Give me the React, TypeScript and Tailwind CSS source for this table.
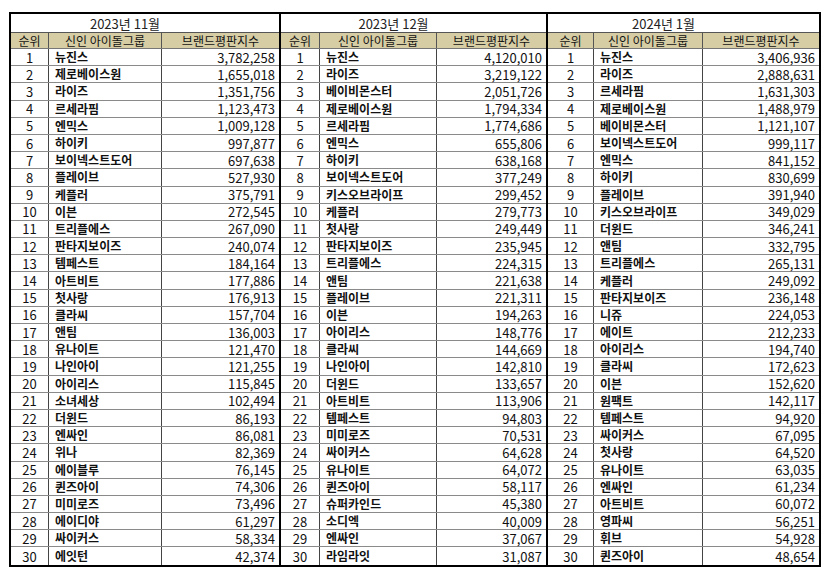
import React from 'react';

type Row = [string, string];

const nov: Row[] = [
  ['뉴진스', '3,782,258'], ['제로베이스원', '1,655,018'], ['라이즈', '1,351,756'], ['르세라핌', '1,123,473'],
  ['엔믹스', '1,009,128'], ['하이키', '997,877'], ['보이넥스트도어', '697,638'], ['플레이브', '527,930'],
  ['케플러', '375,791'], ['이븐', '272,545'], ['트리플에스', '267,090'], ['판타지보이즈', '240,074'],
  ['템페스트', '184,164'], ['아트비트', '177,886'], ['첫사랑', '176,913'], ['클라씨', '157,704'],
  ['앤팀', '136,003'], ['유나이트', '121,470'], ['나인아이', '121,255'], ['아이리스', '115,845'],
  ['소녀세상', '102,494'], ['더윈드', '86,193'], ['엔싸인', '86,081'], ['위나', '82,369'],
  ['에이블루', '76,145'], ['퀸즈아이', '74,306'], ['미미로즈', '73,496'], ['에이디야', '61,297'],
  ['싸이커스', '58,334'], ['에잇턴', '42,374'],
];

const dec: Row[] = [
  ['뉴진스', '4,120,010'], ['라이즈', '3,219,122'], ['베이비몬스터', '2,051,726'], ['제로베이스원', '1,794,334'],
  ['르세라핌', '1,774,686'], ['엔믹스', '655,806'], ['하이키', '638,168'], ['보이넥스트도어', '377,249'],
  ['키스오브라이프', '299,452'], ['케플러', '279,773'], ['첫사랑', '249,449'], ['판타지보이즈', '235,945'],
  ['트리플에스', '224,315'], ['앤팀', '221,638'], ['플레이브', '221,311'], ['이븐', '194,263'],
  ['아이리스', '148,776'], ['클라씨', '144,669'], ['나인아이', '142,810'], ['더윈드', '133,657'],
  ['아트비트', '113,906'], ['템페스트', '94,803'], ['미미로즈', '70,531'], ['싸이커스', '64,628'],
  ['유나이트', '64,072'], ['퀸즈아이', '58,117'], ['슈퍼카인드', '45,380'], ['소디엑', '40,009'],
  ['엔싸인', '37,067'], ['라임라잇', '31,087'],
];

const jan: Row[] = [
  ['뉴진스', '3,406,936'], ['라이즈', '2,888,631'], ['르세라핌', '1,631,303'], ['제로베이스원', '1,488,979'],
  ['베이비몬스터', '1,121,107'], ['보이넥스트도어', '999,117'], ['엔믹스', '841,152'], ['하이키', '830,699'],
  ['플레이브', '391,940'], ['키스오브라이프', '349,029'], ['더윈드', '346,241'], ['앤팀', '332,795'],
  ['트리플에스', '265,131'], ['케플러', '249,092'], ['판타지보이즈', '236,148'], ['니쥬', '224,053'],
  ['에이트', '212,233'], ['아이리스', '194,740'], ['클라씨', '172,623'], ['이븐', '152,620'],
  ['원팩트', '142,117'], ['템페스트', '94,920'], ['싸이커스', '67,095'], ['첫사랑', '64,520'],
  ['유나이트', '63,035'], ['엔싸인', '61,234'], ['아트비트', '60,072'], ['영파씨', '56,251'],
  ['휘브', '54,928'], ['퀸즈아이', '48,654'],
];

const Panel = ({ title, rows, cols, first }: { title: string; rows: Row[]; cols: string; first?: boolean }) => (
  <div className={`flex flex-col border-y-2 border-r-2 border-black ${first ? 'border-l-2' : ''}`}>
    <div className="h-[19px] flex items-center justify-center pr-[40px] border-b border-[#555] bg-white text-[13px] leading-none text-[#222]">
      {title}
    </div>
    <div className={`grid ${cols} h-[16px] bg-[#d6cda5] border-b border-[#777] text-[12px] text-[#111] leading-none`}>
      <div className="flex items-center justify-center border-r border-[#555]">순위</div>
      <div className="flex items-center justify-center border-r border-[#555]">신인 아이돌그룹</div>
      <div className="flex items-center justify-center">브랜드평판지수</div>
    </div>
    {rows.map((r, i) => (
      <div
        key={i}
        className={`grid ${cols} h-[17.2px] text-[13px] leading-none text-[#111] ${i < rows.length - 1 ? 'border-b border-[#8a8a8a]' : ''}`}
      >
        <div className="flex items-center justify-center border-r border-[#444]">{i + 1}</div>
        <div className="flex items-center pl-[6px] border-r border-[#444] text-[12px] font-bold">{r[0]}</div>
        <div className="flex items-center justify-end pr-[4px]">{r[1]}</div>
      </div>
    ))}
  </div>
);

export default function App() {
  return (
    <div
      className="w-[830px] h-[576px] bg-white pt-[12px] pl-[9px] overflow-hidden"
      style={{ fontFamily: '"Noto Sans CJK KR", "Noto Sans", sans-serif' }}
    >
      <div className="flex">
        <div className="w-[272px]">
          <Panel first title="2023년 11월" rows={nov} cols="grid-cols-[38px_113px_1fr]" />
        </div>
        <div className="w-[267px]">
          <Panel title="2023년 12월" rows={dec} cols="grid-cols-[39px_117px_1fr]" />
        </div>
        <div className="w-[273px]">
          <Panel title="2024년 1월" rows={jan} cols="grid-cols-[46px_109px_1fr]" />
        </div>
      </div>
    </div>
  );
}
